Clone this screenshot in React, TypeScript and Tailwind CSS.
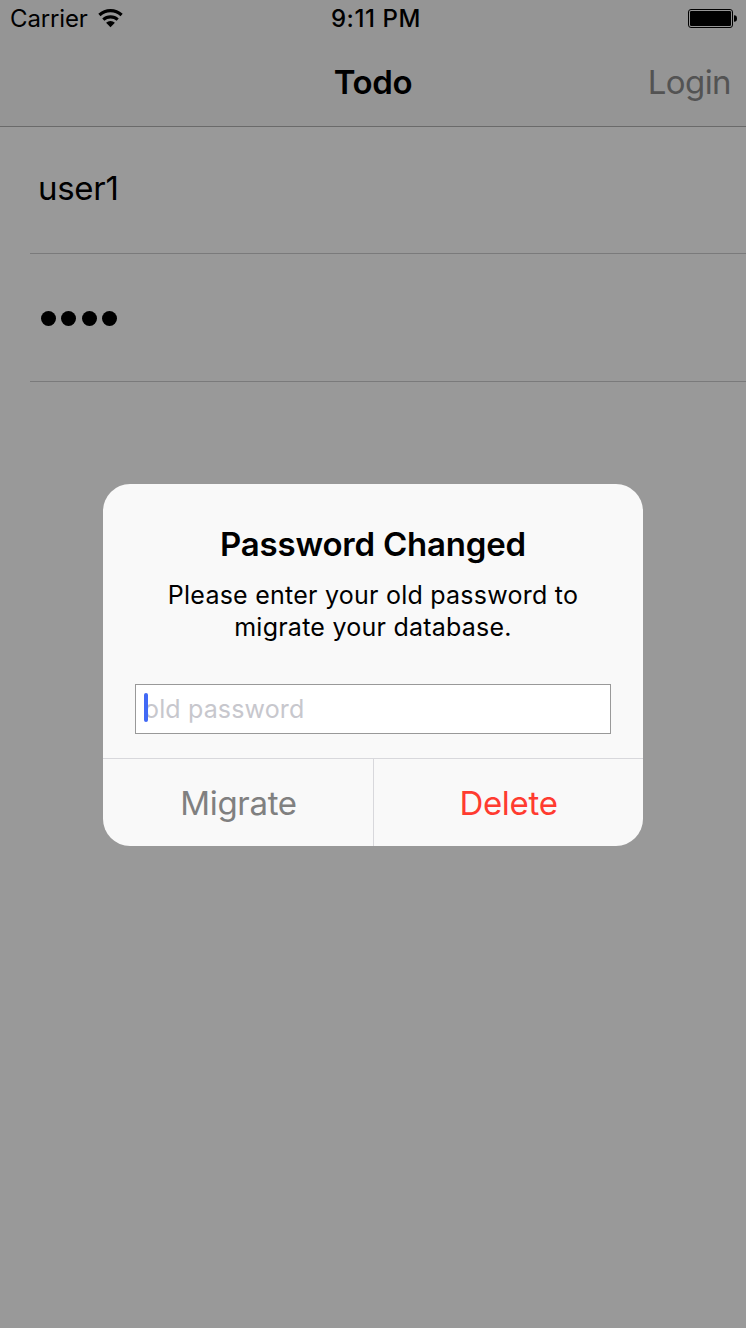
import React from "react";

function WifiIcon() {
  return (
    <svg width="26" height="20" viewBox="0 0 26 20" fill="none" aria-hidden="true">
      <path d="M1.4 6a16.500 16.500 0 0 1 22.200 0" stroke="#000" strokeWidth="3.2" />
      <path d="M5.300 10.700a10.700 10.700 0 0 1 14.400 0" stroke="#000" strokeWidth="3.1" />
      <path d="M12.500 18.200 8.100 13.700a6.400 6.400 0 0 1 8.800 0Z" fill="#000" />
    </svg>
  );
}

function BatteryIcon() {
  return (
    <svg width="50" height="20" viewBox="0 0 50 20" fill="none" aria-hidden="true">
      <rect x="0.5" y="0.5" width="44" height="18" rx="2.5" stroke="#000" />
      <rect x="2" y="2" width="41" height="15" rx="1.2" fill="#000" />
      <path d="M46 6.2c2.2 0 3 1.200 3 3.300s-.8 3.300-3 3.300Z" fill="#000" />
    </svg>
  );
}

function StatusBar() {
  return (
    <div className="grid h-10 grid-cols-3 text-[24px] leading-[38px]">
      <div className="flex pl-[10px]">
        <span className="w-[88px] tracking-[-0.15px]">Carrier</span>
        <span className="pt-[9px]">
          <WifiIcon />
        </span>
      </div>
      <div className="pl-[6px] text-center font-medium tracking-[0.6px]">9:11 PM</div>
      <div className="flex justify-end pt-[9px] pr-[8px]">
        <BatteryIcon />
      </div>
    </div>
  );
}

function NavBar() {
  return (
    <div className="grid h-[86px] grid-cols-3 text-[33px] leading-[84px]">
      <span />
      <h1 className="text-center font-semibold tracking-[-0.4px]">Todo</h1>
      <span className="pr-[15px] text-right tracking-[-0.6px] text-[#535353]">Login</span>
    </div>
  );
}

function Dialog() {
  return (
    <div className="absolute top-[484px] left-[103px] flex h-[362px] w-[540px] flex-col overflow-hidden rounded-[27px] bg-[#f9f9f9] pt-10 text-center">
      <h2 className="text-[33px] leading-10 font-semibold tracking-[-0.2px] whitespace-nowrap">Password Changed</h2>
      <p className="mt-[15px] text-[25px] leading-8 tracking-[0.24px] whitespace-nowrap">
        <span className="block">Please enter your old password to</span>
        <span className="block">migrate your database.</span>
      </p>
      <div className="relative mx-8 mt-[41px] h-[50px] border border-[#999] bg-white pl-[8px] text-left text-[25px] leading-[48px] tracking-[0.15px] text-[#c7c7cd]">
        <span>old password</span>
        <span className="absolute top-[8px] left-[8px] h-[29px] w-1 rounded-[2px] bg-[#4169f5]" />
      </div>
      <div className="mt-6 grid flex-1 grid-cols-[271px_269px] border-t border-[#d8d8dc] text-[33px] leading-[88px] tracking-[-0.3px]">
        <button className="border-r border-[#d8d8dc] pl-px text-[#808080]">Migrate</button>
        <button className="text-[#ff3b30]">Delete</button>
      </div>
    </div>
  );
}

export default function App() {
  return (
    <div className="relative flex h-[1328px] w-[746px] flex-col overflow-hidden bg-[#999] font-['Inter',sans-serif] text-black">
      <header className="h-[127px] border-b border-[#6a6a6a] bg-[#959595]">
        <StatusBar />
        <NavBar />
      </header>
      <main className="pl-[30px]">
        <div className="h-[127px] border-b border-[#7a7a7b] pl-[8px] text-[33px] leading-[122px] tracking-[-0.3px]">user1</div>
        <div className="flex h-[128px] items-center gap-[5.4px] border-b border-[#7a7a7b] pt-[2px] pl-[11px]">
          <span className="size-[15px] rounded-full bg-black" />
          <span className="size-[15px] rounded-full bg-black" />
          <span className="size-[15px] rounded-full bg-black" />
          <span className="size-[15px] rounded-full bg-black" />
        </div>
      </main>
      <Dialog />
    </div>
  );
}
